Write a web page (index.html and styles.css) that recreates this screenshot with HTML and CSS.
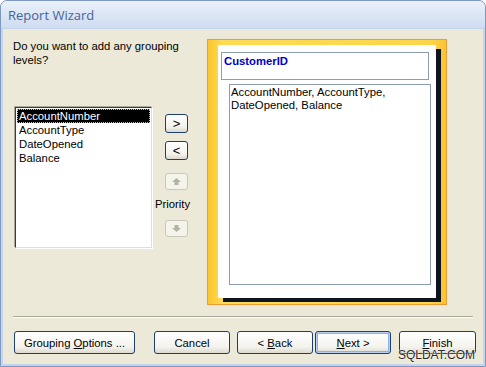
FILE: index.html
```html
<!DOCTYPE html>
<html lang="en">
<head>
  <meta charset="UTF-8" />
  <title>Report Wizard</title>
  <link rel="stylesheet" href="styles.css">
</head>
<body>
  <div class="window">
    <div class="titlebar">Report Wizard</div>

    <div class="client">
      <div class="main">
        <div class="left">
          <p class="question">Do you want to add any grouping<br>levels?</p>

          <div class="picker">
            <ul class="fields">
              <li class="selected">AccountNumber</li>
              <li>AccountType</li>
              <li>DateOpened</li>
              <li>Balance</li>
            </ul>

            <div class="movers">
              <button class="small">&gt;</button>
              <button class="small gap">&lt;</button>
              <button class="small disabled up">
                <svg width="9" height="7" viewBox="0 0 9 7"><path d="M4.5 0 L9 4 L6.5 4 L6.5 7 L2.5 7 L2.5 4 L0 4 Z" fill="#b5b2a4"/></svg>
              </button>
              <span class="priority">Priority</span>
              <button class="small disabled">
                <svg width="9" height="7" viewBox="0 0 9 7"><path d="M4.5 7 L9 3 L6.5 3 L6.5 0 L2.5 0 L2.5 3 L0 3 Z" fill="#b5b2a4"/></svg>
              </button>
            </div>
          </div>
        </div>

        <!-- preview of the report layout -->
        <div class="preview">
          <div class="paper">
            <div class="group-box">CustomerID</div>
            <div class="detail-box">AccountNumber, AccountType,<br>DateOpened, Balance</div>
          </div>
        </div>
      </div>

      <div class="separator"></div>

      <div class="footer">
        <button class="btn options">Grouping <u>O</u>ptions ...</button>
        <button class="btn cancel">Cancel</button>
        <button class="btn back">&lt; <u>B</u>ack</button>
        <button class="btn next"><u>N</u>ext &gt;</button>
        <button class="btn finish"><u>F</u>inish</button>
        <span class="watermark">SQLDAT.COM</span>
      </div>
    </div>
  </div>
</body>
</html>
```

FILE: styles.css
```css
body {
  margin: 0;
  padding: 0;
  background: #ffffff;
  font-family: "Liberation Sans", Arial, sans-serif;
  font-size: 11.3px;
  color: #000;
}

.window {
  width: 486px;
  height: 367px;
  box-sizing: border-box;
  border: 1px solid #7f98c0;
  border-radius: 7px 7px 0 0;
  background: #c3d4ec;
  display: flex;
  flex-direction: column;
  overflow: hidden;
}

.titlebar {
  height: 27px;
  line-height: 28px;
  padding-left: 7px;
  font-family: "Open Sans", "Noto Sans", sans-serif;
  font-size: 13px;
  color: #45649a;
  background: linear-gradient(#eaf1fa, #d9e4f4 60%, #cfdcf0);
}

.client {
  flex: 1;
  margin: 1px 2px 2px 2px;
  background: #ece9d8;
  display: flex;
  flex-direction: column;
}

.main {
  height: 287px;
  box-sizing: border-box;
  display: flex;
  padding: 10px 0 0 10px;
}

.left {
  width: 194px;
}

.question {
  margin: 0;
  line-height: 14px;
}

.picker {
  display: flex;
  margin-top: 40px;
  padding-left: 2px;
}

.fields {
  width: 137px;
  height: 141px;
  box-sizing: border-box;
  margin: 0;
  padding: 1px 1px;
  list-style: none;
  background: #fff;
  border: 1px solid;
  border-color: #3a3a3a #e2dfd2 #e2dfd2 #3a3a3a;
  box-shadow: -1px -1px 0 #aca899, 1px 1px 0 #fff;
}

.fields li {
  height: 14px;
  line-height: 14px;
  padding-left: 2px;
}

.fields li.selected {
  background: #000;
  color: #fff;
  outline: 1px dotted #bbb;
  outline-offset: -1px;
}

.movers {
  display: flex;
  flex-direction: column;
  align-items: flex-start;
  margin-left: 13px;
  padding-top: 7px;
}

.small {
  width: 23px;
  height: 19px;
  padding: 0;
  border: 1px solid #1d3f6e;
  border-radius: 3px;
  background: linear-gradient(#ffffff, #f3f2ec 70%, #dcd8cb);
  font-family: "Liberation Sans", Arial, sans-serif;
  font-size: 13px;
  color: #000;
  display: flex;
  align-items: center;
  justify-content: center;
}

.small.gap {
  margin-top: 8px;
}

.small.disabled {
  height: 17px;
  border-color: #c9c7ba;
  background: #f5f4ea;
}

.small.up {
  margin-top: 13px;
}

.priority {
  margin: 7px 0 9px -10px;
  line-height: 14px;
}

.preview {
  width: 240px;
  height: 266px;
  box-sizing: border-box;
  border: 1px solid #ec9e32;
  background: linear-gradient(to right, #fbc52e, #ffdb55 6%, #fdd548 94%, #f8c434);
  padding: 5px 0 0 10px;
}

.paper {
  width: 218px;
  height: 253px;
  box-sizing: border-box;
  background: #fff;
  box-shadow: 5px 4px 0 #0e1420;
  padding: 7px 0 0 3px;
}

.group-box {
  width: 208px;
  height: 28px;
  box-sizing: border-box;
  border: 1px solid #8e9db0;
  padding: 1px 2px;
  line-height: 14px;
  font-weight: bold;
  color: #0000cc;
}

.detail-box {
  width: 202px;
  height: 201px;
  box-sizing: border-box;
  margin: 4px 0 0 8px;
  border: 1px solid #8e9db0;
  padding: 1px 1px;
  line-height: 13px;
}

.separator {
  margin: 0 10px;
  border-top: 1px solid #aca899;
  border-bottom: 1px solid #fff;
}

.footer {
  position: relative;
  display: flex;
  padding: 13px 0 0 11px;
}

.btn {
  height: 23px;
  width: 76px;
  padding: 0;
  border: 1px solid #1d3f6e;
  border-radius: 3px;
  background: linear-gradient(#ffffff, #f4f3ee 70%, #dedace);
  font-family: "Liberation Sans", Arial, sans-serif;
  font-size: 11.3px;
  color: #000;
}

.btn.options {
  width: 121px;
}

.btn.cancel {
  margin-left: 19px;
}

.btn.back {
  margin-left: 7px;
}

.btn.next {
  margin-left: 2px;
  box-shadow: inset 0 0 0 1px #b9d0f3, inset 0 0 0 2px #8fb0e6;
}

.btn.finish {
  width: 77px;
  margin-left: 8px;
}

.watermark {
  position: absolute;
  right: 8px;
  top: 31px;
  font-size: 12px;
  line-height: 13px;
  color: #2a2a2a;
  text-shadow: 0 0 2px #fff, 0 0 1px #fff;
}
```
